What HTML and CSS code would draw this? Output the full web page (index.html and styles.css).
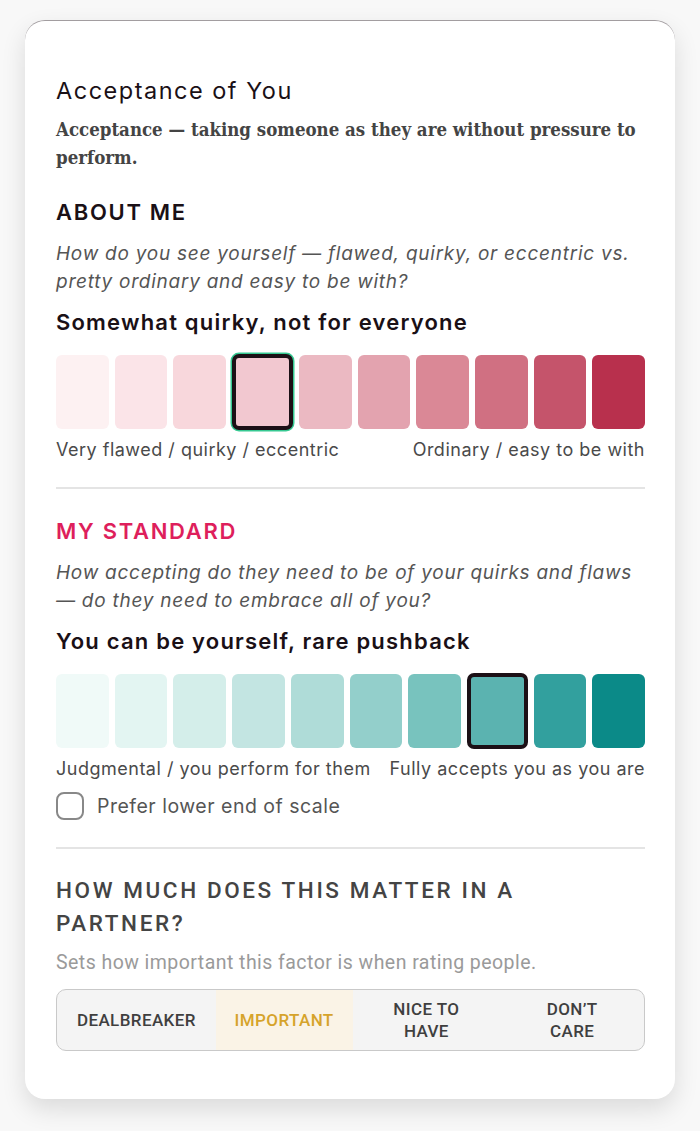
FILE: index.html
```html
<!DOCTYPE html>
<html lang="en">
<head>
<meta charset="utf-8">
<title>Acceptance of You</title>
<link rel="stylesheet" href="styles.css">
</head>
<body>
<main class="card">
  <h1 class="title">Acceptance of You</h1>
  <p class="subtitle">Acceptance — taking someone as they are without pressure to perform.</p>

  <section class="block">
    <h2 class="eyebrow">ABOUT ME</h2>
    <p class="question">How do you see yourself — flawed, quirky, or eccentric vs. pretty ordinary and easy to be with?</p>
    <p class="answer">Somewhat quirky, not for everyone</p>
    <div class="scale">
      <div class="sw p1"></div>
      <div class="sw p2"></div>
      <div class="sw p3"></div>
      <div class="sw p4 selected focus"></div>
      <div class="sw p5"></div>
      <div class="sw p6"></div>
      <div class="sw p7"></div>
      <div class="sw p8"></div>
      <div class="sw p9"></div>
      <div class="sw p10"></div>
    </div>
    <div class="ends">
      <span>Very flawed / quirky / eccentric</span>
      <span>Ordinary / easy to be with</span>
    </div>
  </section>

  <hr class="divider">

  <section class="block">
    <h2 class="eyebrow pink">MY STANDARD</h2>
    <p class="question">How accepting do they need to be of your quirks and flaws — do they need to embrace all of you?</p>
    <p class="answer">You can be yourself, rare pushback</p>
    <div class="scale">
      <div class="sw t1"></div>
      <div class="sw t2"></div>
      <div class="sw t3"></div>
      <div class="sw t4"></div>
      <div class="sw t5"></div>
      <div class="sw t6"></div>
      <div class="sw t7"></div>
      <div class="sw t8 selected"></div>
      <div class="sw t9"></div>
      <div class="sw t10"></div>
    </div>
    <div class="ends">
      <span>Judgmental / you perform for them</span>
      <span>Fully accepts you as you are</span>
    </div>
    <label class="check">
      <span class="box"></span>
      <span>Prefer lower end of scale</span>
    </label>
  </section>

  <hr class="divider after-check">

  <section class="block">
    <h2 class="matter">HOW MUCH DOES THIS MATTER IN A PARTNER?</h2>
    <p class="hint">Sets how important this factor is when rating people.</p>
    <div class="segmented">
      <div class="seg s1">DEALBREAKER</div>
      <div class="seg s2 active">IMPORTANT</div>
      <div class="seg s3">NICE TO<br>HAVE</div>
      <div class="seg s4">DON’T<br>CARE</div>
    </div>
  </section>
</main>
</body>
</html>
```

FILE: styles.css
```css
html, body {
  margin: 0;
  padding: 0;
}
body {
  background: #f8f8f8;
  padding: 20px 25px 31px;
  font-family: Inter, "Noto Sans", sans-serif;
  color: #1a1016;
}
.card {
  background: #fff;
  border-top: 1px solid #a29da0;
  border-radius: 20px;
  box-shadow: 0 10px 24px rgba(0, 0, 0, 0.12);
  padding: 54px 30px 48px 31px;
  height: 1079px;
  box-sizing: border-box;
}
.title {
  margin: 0;
  font-size: 23.5px;
  font-weight: 400;
  line-height: 32px;
  letter-spacing: 1.5px;
}
.subtitle {
  margin: 9px 0 0;
  font-family: "DejaVu Serif Condensed", "DejaVu Serif", serif;
  font-weight: 700;
  font-size: 18.5px;
  line-height: 28px;
  color: #444;
  letter-spacing: 0;
}
.block {
  display: flex;
  flex-direction: column;
}
.eyebrow {
  margin: 26px 0 0;
  font-size: 22px;
  font-weight: 600;
  letter-spacing: 1.7px;
  line-height: 28px;
  color: #1a1016;
}
.eyebrow.pink {
  color: #de1f5c;
  margin-top: 28px;
}
.question {
  margin: 14px 0 0;
  font-style: italic;
  font-size: 19px;
  line-height: 28px;
  letter-spacing: 0.75px;
  color: #555;
}
.answer {
  margin: 12px 0 0;
  font-size: 22px;
  font-weight: 600;
  line-height: 28px;
  letter-spacing: 1.2px;
  color: #1a1016;
}
.scale {
  display: flex;
  gap: 6px;
  margin-top: 19px;
  height: 74px;
  align-items: stretch;
}
.sw {
  flex: 1 1 0;
  border-radius: 6px;
}
.sw.selected {
  border: 4px solid #1c1016;
  border-radius: 7px;
  margin: -1px 0;
}
.sw.focus {
  box-shadow: 0 0 0 1.5px #36c992;
}
.p1 { background: #fdf1f2; }
.p2 { background: #fbe4e8; }
.p3 { background: #f8d7dc; }
.p4 { background: #f2c8d0; }
.p5 { background: #ebb9c2; }
.p6 { background: #e3a3af; }
.p7 { background: #da8896; }
.p8 { background: #d07082; }
.p9 { background: #c5546b; }
.p10 { background: #b8304d; }
.t1 { background: #f0faf8; }
.t2 { background: #e3f5f2; }
.t3 { background: #d4eeea; }
.t4 { background: #c3e5e2; }
.t5 { background: #afdcd8; }
.t6 { background: #93cfcb; }
.t7 { background: #78c3be; }
.t8 { background: #5bb3b0; }
.t9 { background: #32a09e; }
.t10 { background: #0b8a88; }
.ends {
  display: flex;
  justify-content: space-between;
  margin-top: 9px;
  font-size: 18px;
  line-height: 24px;
  letter-spacing: 0.5px;
  color: #4a4a4a;
}
.check {
  display: flex;
  align-items: center;
  gap: 13px;
  margin-top: 11px;
  font-size: 19.5px;
  letter-spacing: 0.5px;
  color: #555;
}
.box {
  width: 28px;
  height: 28px;
  flex: none;
  box-sizing: border-box;
  border: 2px solid #888;
  border-radius: 8px;
}
.divider {
  border: 0;
  border-top: 2px solid #e4e4e4;
  margin: 25px 0 0;
}
.divider.after-check { margin-top: 27px; }
.matter {
  margin: 25px 0 0;
  font-family: Roboto, "Liberation Sans", sans-serif;
  font-size: 22.5px;
  font-weight: 500;
  letter-spacing: 2.6px;
  line-height: 33px;
  color: #444;
  padding-right: 100px;
}
.hint {
  margin: 11px 0 0;
  font-family: Roboto, "Liberation Sans", sans-serif;
  font-size: 19.5px;
  line-height: 24px;
  letter-spacing: 0.45px;
  color: #9a9a9a;
}
.segmented {
  display: flex;
  margin-top: 14px;
  height: 62px;
  box-sizing: border-box;
  border: 1.5px solid #c9c9c9;
  border-radius: 10px;
  background: #f4f4f4;
  overflow: hidden;
}
.seg {
  flex: 1 1 0;
  display: flex;
  align-items: center;
  justify-content: center;
  text-align: center;
  font-family: Roboto, "Liberation Sans", sans-serif;
  font-weight: 500;
  font-size: 17px;
  line-height: 22px;
  letter-spacing: 0.4px;
  color: #3f3f3f;
}
.s1 { flex-grow: 159; }
.s2 { flex-grow: 137; }
.s3 { flex-grow: 148; }
.s4 { flex-grow: 144; }
.seg.active {
  background: #faf3e6;
  color: #d6a32b;
}
```
